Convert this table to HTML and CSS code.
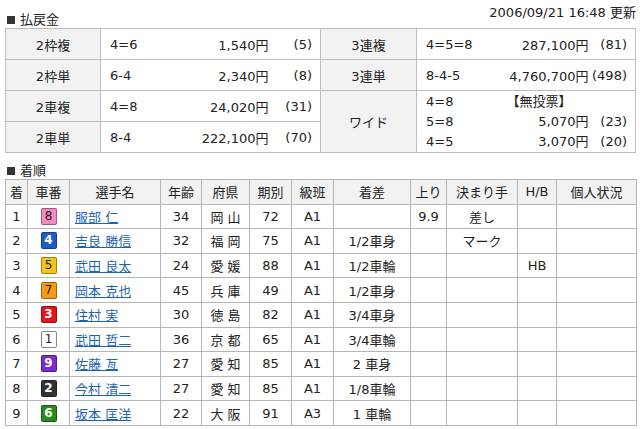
FILE: index.html
```html
<!DOCTYPE html>
<html lang="ja">
<head>
<meta charset="utf-8">
<title>払戻金・着順</title>
<link rel="stylesheet" href="styles.css">
</head>
<body>
<div class="page">
  <div class="top">
    <h2 class="sec">払戻金</h2>
    <div class="stamp">2006/09/21 16:48 更新</div>
  </div>
  <table class="pay">
    <colgroup>
      <col class="c-lab"><col class="c-combo"><col class="c-amt"><col class="c-pop">
      <col class="c-lab2"><col class="c-combo2"><col class="c-amt2"><col class="c-pop2">
    </colgroup>
    <tr>
      <th>2枠複</th><td class="combo">4=6</td><td class="amt">1,540円</td><td class="pop">(5)</td>
      <th>3連複</th><td class="combo">4=5=8</td><td class="amt">287,100円</td><td class="pop">(81)</td>
    </tr>
    <tr>
      <th>2枠単</th><td class="combo">6-4</td><td class="amt">2,340円</td><td class="pop">(8)</td>
      <th>3連単</th><td class="combo">8-4-5</td><td class="amt">4,760,700円</td><td class="pop">(498)</td>
    </tr>
    <tr>
      <th>2車複</th><td class="combo">4=8</td><td class="amt">24,020円</td><td class="pop">(31)</td>
      <th rowspan="2">ワイド</th>
      <td class="combo multi" rowspan="2"><div>4=8</div><div>5=8</div><div>4=5</div></td>
      <td class="amt multi" rowspan="2"><div class="none">【無投票】</div><div>5,070円</div><div>3,070円</div></td>
      <td class="pop multi" rowspan="2"><div>&nbsp;</div><div>(23)</div><div>(20)</div></td>
    </tr>
    <tr>
      <th>2車単</th><td class="combo">8-4</td><td class="amt">222,100円</td><td class="pop">(70)</td>
    </tr>
  </table>

  <h2 class="sec sec-res">着順</h2>
  <table class="res">
    <colgroup>
      <col class="r1"><col class="r2"><col class="r3"><col class="r4"><col class="r5"><col class="r6">
      <col class="r7"><col class="r8"><col class="r9"><col class="r10"><col class="r11"><col class="r12">
    </colgroup>
    <tr class="head">
      <th>着</th><th>車番</th><th>選手名</th><th>年齢</th><th>府県</th><th>期別</th><th>級班</th><th>着差</th><th>上り</th><th>決まり手</th><th>H/B</th><th>個人状況</th>
    </tr>
    <tr><td>1</td><td><span class="car car8">8</span></td><td class="name"><a href="#">服部 仁</a></td><td>34</td><td>岡 山</td><td>72</td><td>A1</td><td></td><td>9.9</td><td>差し</td><td></td><td></td></tr>
    <tr><td>2</td><td><span class="car car4">4</span></td><td class="name"><a href="#">吉良 勝信</a></td><td>32</td><td>福 岡</td><td>75</td><td>A1</td><td>1/2車身</td><td></td><td>マーク</td><td></td><td></td></tr>
    <tr><td>3</td><td><span class="car car5">5</span></td><td class="name"><a href="#">武田 良太</a></td><td>24</td><td>愛 媛</td><td>88</td><td>A1</td><td>1/2車輪</td><td></td><td></td><td>HB</td><td></td></tr>
    <tr><td>4</td><td><span class="car car7">7</span></td><td class="name"><a href="#">岡本 克也</a></td><td>45</td><td>兵 庫</td><td>49</td><td>A1</td><td>1/2車身</td><td></td><td></td><td></td><td></td></tr>
    <tr><td>5</td><td><span class="car car3">3</span></td><td class="name"><a href="#">住村 実</a></td><td>30</td><td>徳 島</td><td>82</td><td>A1</td><td>3/4車身</td><td></td><td></td><td></td><td></td></tr>
    <tr><td>6</td><td><span class="car car1">1</span></td><td class="name"><a href="#">武田 哲二</a></td><td>36</td><td>京 都</td><td>65</td><td>A1</td><td>3/4車輪</td><td></td><td></td><td></td><td></td></tr>
    <tr><td>7</td><td><span class="car car9">9</span></td><td class="name"><a href="#">佐藤 亙</a></td><td>27</td><td>愛 知</td><td>85</td><td>A1</td><td>2 車身</td><td></td><td></td><td></td><td></td></tr>
    <tr><td>8</td><td><span class="car car2">2</span></td><td class="name"><a href="#">今村 清二</a></td><td>27</td><td>愛 知</td><td>85</td><td>A1</td><td>1/8車輪</td><td></td><td></td><td></td><td></td></tr>
    <tr><td>9</td><td><span class="car car6">6</span></td><td class="name"><a href="#">坂本 匡洋</a></td><td>22</td><td>大 阪</td><td>91</td><td>A3</td><td>1 車輪</td><td></td><td></td><td></td><td></td></tr>
  </table>
</div>
</body>
</html>
```

FILE: styles.css
```css
html, body {
  margin: 0;
  padding: 0;
  background: #fff;
}

body {
  font-family: "DejaVu Sans", "Noto Sans CJK JP", sans-serif;
  font-size: 13px;
  color: #222;
}

.page {
  padding: 0 4px 0 5px;
}

.top {
  display: flex;
  justify-content: space-between;
  height: 28px;
}

.sec {
  margin: 0;
  font-size: 13px;
  font-weight: normal;
  line-height: 16px;
  display: flex;
  align-items: center;
  padding-left: 2px;
}

.sec::before {
  content: "";
  display: inline-block;
  width: 8px;
  height: 8px;
  background: #333;
  margin-right: 5px;
}

.top .sec {
  align-self: flex-end;
}

.stamp {
  align-self: flex-start;
  padding-top: 5px;
  line-height: 15px;
}

.sec-res {
  margin-top: 10px;
  height: 16px;
}

table {
  border-collapse: collapse;
  table-layout: fixed;
}

/* payout table */
.pay {
  width: 630px;
  border: 1px solid #bdbdbd;
}

.c-lab { width: 95px; }
.c-combo { width: 60px; }
.c-amt { width: 108px; }
.c-pop { width: 52px; }
.c-lab2 { width: 96px; }
.c-combo2 { width: 50px; }
.c-amt2 { width: 122px; }
.c-pop2 { width: 47px; }

.pay th,
.pay td {
  height: 30px;
  padding: 0;
  border-top: 1px solid #bdbdbd;
  border-bottom: 1px solid #bdbdbd;
  white-space: nowrap;
}

.pay th {
  background: #f2f2f2;
  font-weight: normal;
  text-align: center;
  border-left: 1px solid #bdbdbd;
  border-right: 1px solid #bdbdbd;
}

.pay .combo {
  padding-left: 9px;
  text-align: left;
}

.pay .amt {
  text-align: right;
}

.pay .pop {
  text-align: right;
  padding-right: 8px;
}

.pay .multi div {
  line-height: 20px;
}

.pay .amt .none {
  padding-right: 17px;
}

/* result table */
.res {
  width: 631px;
  border: 1px solid #b5b5b5;
}

.r1 { width: 22px; }
.r2 { width: 42px; }
.r3 { width: 91px; }
.r4 { width: 41px; }
.r5 { width: 48px; }
.r6 { width: 42px; }
.r7 { width: 42px; }
.r8 { width: 77px; }
.r9 { width: 36px; }
.r10 { width: 71px; }
.r11 { width: 39px; }
.r12 { width: 80px; }

.res th,
.res td {
  height: 23.6px;
  padding: 0;
  border: 1px solid #b5b5b5;
  text-align: center;
  white-space: nowrap;
}

.res th {
  background: #f2f2f2;
  font-weight: normal;
}

.res td.name {
  text-align: left;
  padding-left: 5px;
}

.res a {
  color: #1e63b0;
  text-decoration: underline;
}

.car {
  display: inline-block;
  width: 14px;
  height: 15px;
  line-height: 15px;
  border: 1px solid rgba(0, 0, 0, 0.35);
  border-radius: 2px;
  font-size: 12px;
  text-align: center;
  vertical-align: middle;
  color: #222;
}

.car1 { background: #fff; border-color: #888; }
.car2 { background: #333; color: #fff; font-weight: bold; }
.car3 { background: #e3161c; color: #fff; font-weight: bold; }
.car4 { background: #1e5ccc; color: #fff; font-weight: bold; }
.car5 { background: #f4c512; }
.car6 { background: #2b8a1d; color: #fff; font-weight: bold; }
.car7 { background: #f49a17; }
.car8 { background: #f38bc0; }
.car9 { background: #7b2bd0; color: #fff; font-weight: bold; }
```
